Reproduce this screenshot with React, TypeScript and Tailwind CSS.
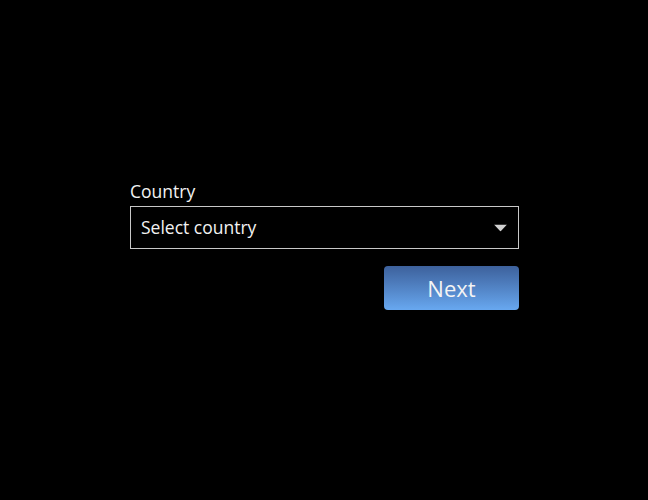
import { useState } from "react";

export default function App() {
  const [country, setCountry] = useState("");

  return (
    <div className="min-h-screen w-full bg-black pt-[179px] font-['Open_Sans',sans-serif] text-white">
      <form className="ml-[130px] flex w-[389px] flex-col" onSubmit={(e) => e.preventDefault()}>
        <label htmlFor="country" className="mb-[3px] text-[17.5px] leading-6 text-[#f2f2f2]">
          Country
        </label>
        <div className="relative">
          <select
            id="country"
            value={country}
            onChange={(e) => setCountry(e.target.value)}
            className="h-[43px] w-full appearance-none rounded-none border border-[#c8c8c8] bg-black pl-[10px] pr-10 text-[17.5px] text-[#f2f2f2] outline-none"
          >
            <option value="">Select country</option>
            <option value="us">United States</option>
            <option value="ca">Canada</option>
            <option value="gb">United Kingdom</option>
          </select>
          <svg
            className="pointer-events-none absolute right-[12px] top-1/2 -translate-y-1/2"
            width="13"
            height="7"
            viewBox="0 0 13 7"
          >
            <path d="M0 0h13L6.5 7z" fill="#d0d0d0" />
          </svg>
        </div>
        <div className="mt-[17px] flex justify-end">
          <button
            type="submit"
            className="h-[44px] w-[135px] rounded-[4px] bg-gradient-to-b from-[#3d619c] to-[#68a8f0] pt-[1px] text-[22px] text-[#f4f4f4]"
          >
            Next
          </button>
        </div>
      </form>
    </div>
  );
}
